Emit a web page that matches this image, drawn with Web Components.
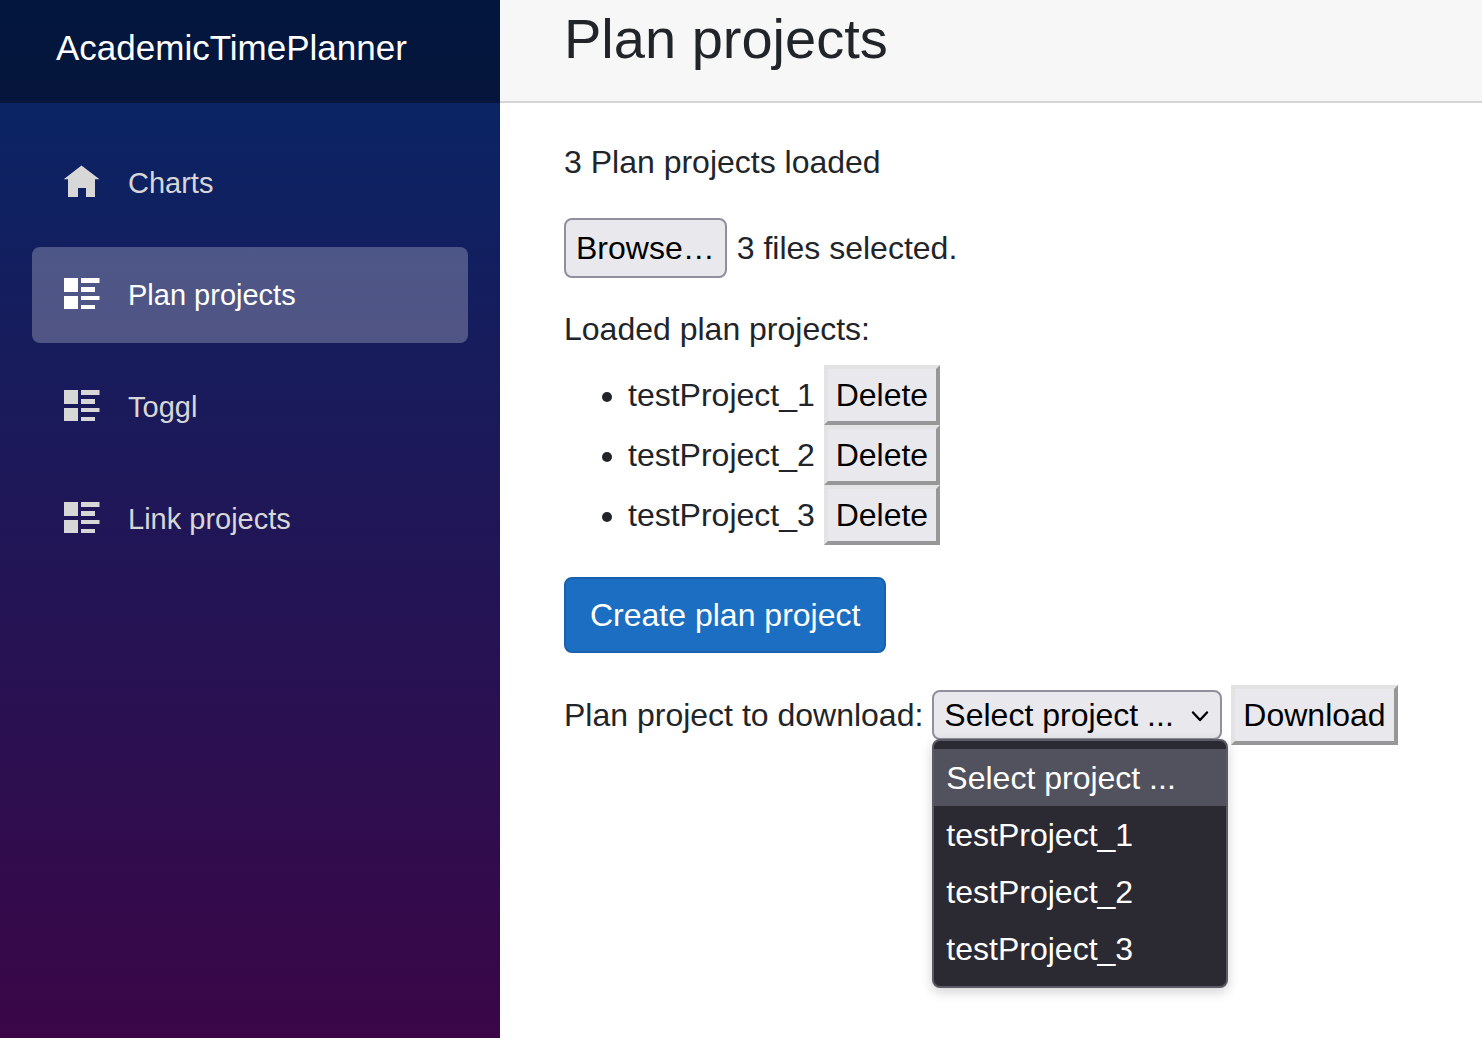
<!DOCTYPE html>
<html lang="en">
<head>
<meta charset="utf-8">
<title>Plan projects</title>
<style>
  html, body { margin: 0; }
  body {
    font: 32px/48px "Liberation Sans", Arial, sans-serif;
    color: #212529;
    background: #fff;
  }
</style>
</head>
<body>
<planner-app>
  <planner-sidebar slot="sidebar" brand="AcademicTimePlanner">
    <nav-item icon="home">Charts</nav-item>
    <nav-item icon="list" active>Plan projects</nav-item>
    <nav-item icon="list">Toggl</nav-item>
    <nav-item icon="list">Link projects</nav-item>
  </planner-sidebar>
  <page-header slot="header">Plan projects</page-header>
  <plan-projects></plan-projects>
</planner-app>

<script>
  const define = (name, html, setup) => {
    const template = document.createElement('template');
    template.innerHTML = '<style>*{box-sizing:border-box}</style>' + html;
    customElements.define(name, class extends HTMLElement {
      constructor() {
        super();
        this.attachShadow({ mode: 'open' }).append(template.content.cloneNode(true));
      }
      connectedCallback() { if (setup) setup(this, this.shadowRoot); }
    });
  };

  const icons = {
    home: '<path d="M17.5 .5 35.5 14.3H31V32h-9v-9h-8v9H4V14.3H-.3z"/>',
    list: '<path d="M0 1h14v14H0zM0 19h14v13H0zM17 1h18.500v5H17zM17 10h14v5H17zM17 19h18.500v4H17zM17 28h14v4H17z"/>'
  };

  define('planner-app', `
    <style>
      :host { display: flex; min-height: 100vh; }
      main { flex: 1; min-width: 0; }
      article { padding: 35px 48px 32px 64px; }
      ::slotted([slot=sidebar]) { flex: 0 0 500px; }
    </style>
    <slot name="sidebar"></slot>
    <main>
      <slot name="header"></slot>
      <article><slot></slot></article>
    </main>`);

  define('planner-sidebar', `
    <style>
      :host { display: block; background: linear-gradient(180deg, #052767 0%, #3a0647 100%); }
      header { height: 103px; padding: 24px 56px; background: rgba(0, 0, 0, .4); }
      a { color: #fff; font-size: 35px; text-decoration: none; }
      nav { display: flex; flex-direction: column; gap: 16px; padding: 32px; }
    </style>
    <header><a href="#"></a></header>
    <nav><slot></slot></nav>`,
    (host, root) => { root.querySelector('a').textContent = host.getAttribute('brand'); });

  define('nav-item', `
    <style>
      :host { display: block; }
      a {
        display: flex; align-items: center; gap: 28px;
        height: 96px; padding: 0 32px; border-radius: 8px;
        color: #d7d7d7; font-size: 29px; text-decoration: none;
      }
      svg { width: 36px; height: 36px; fill: currentColor; overflow: visible; }
      :host([active]) a { background: rgba(255, 255, 255, .25); color: #fff; }
    </style>
    <a href="#"><svg viewBox="0 0 36 36" aria-hidden="true"></svg><span><slot></slot></span></a>`,
    (host, root) => {
      root.querySelector('svg').innerHTML = icons[host.getAttribute('icon')];
      if (host.hasAttribute('active')) root.querySelector('a').setAttribute('aria-current', 'page');
    });

  define('page-header', `
    <style>
      :host { display: block; height: 103px; padding: 5px 64px; background: #f7f7f7; border-bottom: 2px solid #d6d5d5; box-sizing: border-box; }
      h1 { margin: 0; font-size: 56px; font-weight: 400; line-height: 67px; }
    </style>
    <h1><slot></slot></h1>`);

  define('outset-button', `
    <style>
      :host { display: inline-block; }
      button {
        display: block; margin: 0; padding: 2px 8px;
        border: 4px solid; border-color: #e3e3e3 #979797 #979797 #e3e3e3;
        background: #e9e9ed; color: #000; font: inherit;
      }
    </style>
    <button type="button"><slot></slot></button>`);

  define('file-picker', `
    <style>
      :host { display: flex; align-items: center; gap: 10px; }
      input { position: absolute; width: 1px; height: 1px; opacity: 0; }
      label { padding: 4px 10px; border: 2px solid #8f8f9d; border-radius: 8px; background: #e9e9ed; color: #000; }
    </style>
    <input id="files" type="file" multiple>
    <label for="files">Browse…</label>
    <output for="files"><slot></slot></output>`);

  define('project-select', `
    <style>
      :host { display: inline-block; position: relative; }
      select {
        display: block; appearance: none; margin: 0; width: 290px; height: 50px;
        padding: 0 40px 0 10px; border: 2px solid #8f8f9d; border-radius: 8px;
        background: #e9e9ed; color: #000; font: inherit; line-height: 46px;
      }
      svg { position: absolute; right: 12px; top: 16px; width: 20px; height: 20px; pointer-events: none; }
      ul {
        position: absolute; z-index: 1; left: 0; top: 49px; width: 296px;
        margin: 0; padding: 8px 0 9px; list-style: none;
        border: 2px solid #5b5b66; border-radius: 8px;
        background: #2b2a33; color: #fff; box-shadow: 0 4px 12px rgba(0, 0, 0, .18);
      }
      li { padding: 2px 12px 0; line-height: 55px; }
      li[aria-selected=true] { background: #52525e; }
    </style>
    <select id="project" aria-label="Plan project to download"></select>
    <svg viewBox="0 0 20 20" fill="none" stroke="#000" stroke-width="2.4" stroke-linecap="round" stroke-linejoin="round" aria-hidden="true"><path d="M3 6.500l7 7.500 7-7.500"/></svg>
    <ul role="listbox" aria-label="Projects"></ul>`,
    (host, root) => {
      const names = ['Select project ...', 'testProject_1', 'testProject_2', 'testProject_3'];
      const select = root.querySelector('select'), list = root.querySelector('ul');
      names.forEach((name, i) => {
        select.add(new Option(name));
        const li = document.createElement('li');
        li.setAttribute('role', 'option');
        li.setAttribute('aria-selected', String(i === 0));
        li.textContent = name;
        li.addEventListener('click', () => {
          select.selectedIndex = i;
          [...list.children].forEach(x => x.setAttribute('aria-selected', String(x === li)));
        });
        list.append(li);
      });
    });

  define('plan-projects', `
    <style>
      :host { display: block; }
      p { margin: 0; }
      file-picker { margin: 32px 0 27px; }
      ul { margin: 12px 0 32px; padding-left: 64px; }
      .create {
        display: block; margin: 0 0 32px; padding: 12px 24px;
        border: 2px solid #1861ac; border-radius: 8px;
        background: #1b6ec2; color: #fff; font: inherit;
      }
      .download { display: flex; flex-wrap: wrap; align-items: center; gap: 9px; }
    </style>
    <p>3 Plan projects loaded</p>
    <file-picker>3 files selected.</file-picker>
    <p>Loaded plan projects:</p>
    <ul>
      <li>testProject_1 <outset-button>Delete</outset-button></li>
      <li>testProject_2 <outset-button>Delete</outset-button></li>
      <li>testProject_3 <outset-button>Delete</outset-button></li>
    </ul>
    <button class="create" type="button">Create plan project</button>
    <div class="download">
      <span>Plan project to download:</span>
      <project-select></project-select>
      <outset-button>Download</outset-button>
    </div>`);
</script>
</body>
</html>
